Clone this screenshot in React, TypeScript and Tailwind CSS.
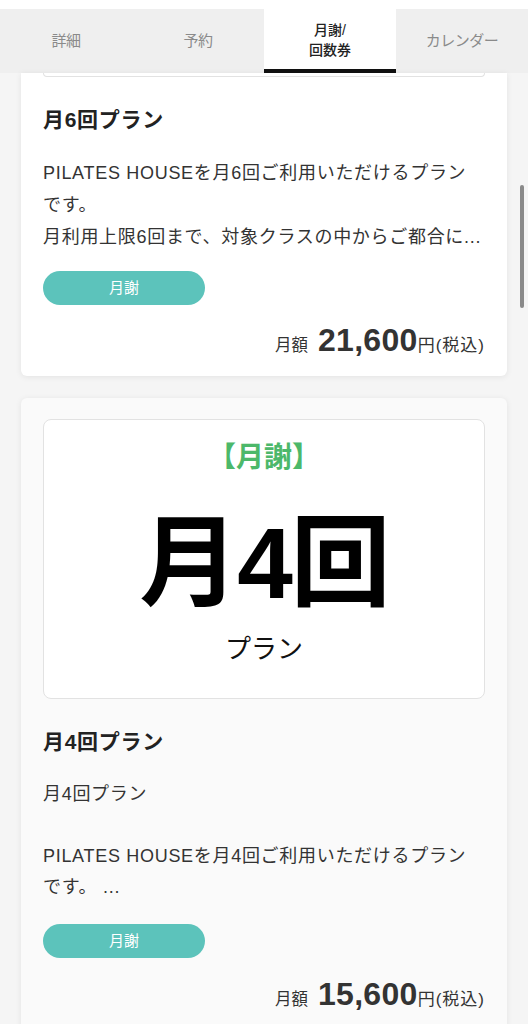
import React from "react";

const tabs = [
  { label: "詳細", active: false },
  { label: "予約", active: false },
  { label: "月謝/\n回数券", active: true },
  { label: "カレンダー", active: false },
];

function Price({ amount }: { amount: string }) {
  return (
    <div className="flex items-baseline justify-end text-[#333] leading-[36px]">
      <span className="text-[16.5px] mr-[10px]">月額</span>
      <span className="text-[32px] font-bold tracking-[0.3px]">{amount}</span>
      <span className="text-[17px] tracking-[1px]">円(税込)</span>
    </div>
  );
}

function Pill() {
  return (
    <div className="w-[162px] h-[34px] rounded-full bg-[#5cc3bb] flex items-center justify-center text-white text-[15px]">
      月謝
    </div>
  );
}

export default function App() {
  return (
    <div className="relative h-[1024px] overflow-hidden bg-[#f5f5f5] font-['Liberation_Sans','Noto_Sans_CJK_JP',sans-serif]">
      <div className="h-[9px] bg-white" />
      <nav className="grid grid-cols-4 h-[64px] bg-[#efefef]">
        {tabs.map((t) =>
          t.active ? (
            <div
              key={t.label}
              className="bg-white border-b-4 border-[#111] flex items-center justify-center text-center text-[14px] leading-[20px] font-medium text-[#222] whitespace-pre-line pt-[2px]"
            >
              {t.label}
            </div>
          ) : (
            <div
              key={t.label}
              className="flex items-center justify-center text-[15px] text-[#8a8a8a] tracking-[-0.5px]"
            >
              {t.label}
            </div>
          )
        )}
      </nav>

      <div className="px-[21px] flex flex-col gap-[22px]">
        {/* Card 1 (partially scrolled) */}
        <div className="bg-white rounded-b-[6px] shadow-[0_1px_6px_rgba(0,0,0,0.08)] px-[22px] pb-[12px]">
          <div className="h-[4px] border border-t-0 border-[#e2e2e2] rounded-b-[8px]" />
          <h2 className="mt-[29px] text-[21px] leading-[28px] font-bold text-[#222] tracking-[0.7px]">
            月6回プラン
          </h2>
          <p className="mt-[23px] text-[18px] leading-[32px] text-[#333] tracking-[0.7px]">
            PILATES HOUSEを月6回ご利用いただけるプラン
            <br />
            です。
            <br />
            月利用上限6回まで、対象クラスの中からご都合に...
          </p>
          <div className="mt-[18px]">
            <Pill />
          </div>
          <div className="mt-[17px]">
            <Price amount="21,600" />
          </div>
        </div>

        {/* Card 2 */}
        <div className="bg-[#fafafa] rounded-[6px] shadow-[0_1px_6px_rgba(0,0,0,0.08)] px-[22px] pt-[21px] pb-[16px]">
          <div className="h-[280px] bg-white border border-[#e2e2e2] rounded-[8px] flex flex-col items-center">
            <div className="mt-[20px] text-[28px] leading-[36px] font-bold text-[#4cb86a]">
              【月謝】
            </div>
            <div className="mt-[27px] text-[100px] leading-[120px] font-bold text-black tracking-[-2px]">
              月4回
            </div>
            <div className="mt-[10px] text-[26px] leading-[32px] text-[#111]">
              プラン
            </div>
          </div>
          <h2 className="mt-[29px] text-[21px] leading-[28px] font-bold text-[#222] tracking-[0.7px]">
            月4回プラン
          </h2>
          <p className="mt-[23px] text-[18px] leading-[31px] text-[#333] tracking-[0.7px]">
            月4回プラン
            <br />
            <br />
            PILATES HOUSEを月4回ご利用いただけるプラン
            <br />
            です。 ...
          </p>
          <div className="mt-[21px]">
            <Pill />
          </div>
          <div className="mt-[18px]">
            <Price amount="15,600" />
          </div>
        </div>
      </div>

      <div className="absolute right-[4px] top-[185px] w-[4px] h-[123px] rounded-full bg-[#8a8a8a]" />
    </div>
  );
}
